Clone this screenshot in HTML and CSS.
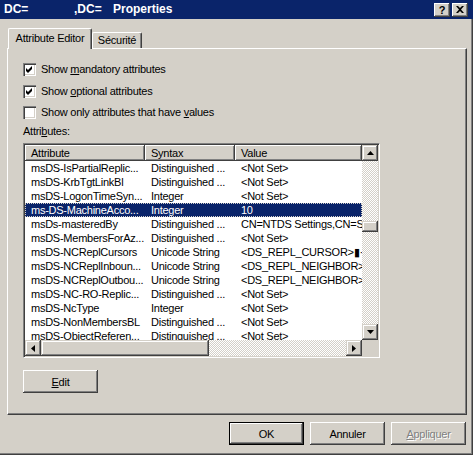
FILE: index.html
```html
<!DOCTYPE html>
<html>
<head>
<meta charset="utf-8">
<link rel="stylesheet" href="styles.css">
</head>
<body>
<div class="window">
  <div class="titlebar">
    <div class="title"><span class="t1">DC=</span><span class="t2">,DC=</span><span class="t3">Properties</span></div>
    <div class="tbtns">
      <span class="tbtn help">?</span>
      <span class="tbtn close"><svg width="8" height="7" viewBox="0 0 8 7"><path d="M0 0h2l2 2l2-2h2l-3 3.5l3 3.5h-2l-2-2l-2 2h-2l3-3.5z" fill="#000"/></svg></span>
    </div>
  </div>

  <div class="tabs">
    <div class="tab sel">Attribute Editor</div>
    <div class="tab">Sécurité</div>
  </div>

  <div class="panel">
    <div class="checks">
      <div class="chk"><span class="box"><svg width="13" height="13" viewBox="0 0 13 13"><path d="M3 5l2 2l4-4v3l-4 4l-2-2z" fill="#000"/></svg></span><span>Show <u>m</u>andatory attributes</span></div>
      <div class="chk"><span class="box"><svg width="13" height="13" viewBox="0 0 13 13"><path d="M3 5l2 2l4-4v3l-4 4l-2-2z" fill="#000"/></svg></span><span>Show <u>o</u>ptional attributes</span></div>
      <div class="chk"><span class="box"></span><span>Show only attributes that have <u>v</u>alues</span></div>
    </div>

    <div class="lbl">Attri<u>b</u>utes:</div>

    <div class="list">
      <div class="main">
        <div class="hdr">
          <div class="hc c1">Attribute</div>
          <div class="hc c2">Syntax</div>
          <div class="hc c3">Value</div>
        </div>
        <div class="row"><span class="c1">msDS-IsPartialReplic...</span><span class="c2">Distinguished ...</span><span class="c3">&lt;Not Set&gt;</span></div>
        <div class="row"><span class="c1">msDS-KrbTgtLinkBl</span><span class="c2">Distinguished ...</span><span class="c3">&lt;Not Set&gt;</span></div>
        <div class="row"><span class="c1">msDS-LogonTimeSyn...</span><span class="c2">Integer</span><span class="c3">&lt;Not Set&gt;</span></div>
        <div class="row selected"><span class="c1">ms-DS-MachineAcco...</span><span class="c2">Integer</span><span class="c3">10</span></div>
        <div class="row"><span class="c1">msDs-masteredBy</span><span class="c2">Distinguished ...</span><span class="c3">CN=NTDS Settings,CN=SERVER</span></div>
        <div class="row"><span class="c1">msDS-MembersForAz...</span><span class="c2">Distinguished ...</span><span class="c3">&lt;Not Set&gt;</span></div>
        <div class="row"><span class="c1">msDS-NCReplCursors</span><span class="c2">Unicode String</span><span class="c3">&lt;DS_REPL_CURSOR&gt;&#9646;&#183;&#183;</span></div>
        <div class="row"><span class="c1">msDS-NCReplInboun...</span><span class="c2">Unicode String</span><span class="c3">&lt;DS_REPL_NEIGHBOR&gt;</span></div>
        <div class="row"><span class="c1">msDS-NCReplOutbou...</span><span class="c2">Unicode String</span><span class="c3">&lt;DS_REPL_NEIGHBOR&gt;</span></div>
        <div class="row"><span class="c1">msDS-NC-RO-Replic...</span><span class="c2">Distinguished ...</span><span class="c3">&lt;Not Set&gt;</span></div>
        <div class="row"><span class="c1">msDS-NcType</span><span class="c2">Integer</span><span class="c3">&lt;Not Set&gt;</span></div>
        <div class="row"><span class="c1">msDS-NonMembersBL</span><span class="c2">Distinguished ...</span><span class="c3">&lt;Not Set&gt;</span></div>
        <div class="row"><span class="c1">msDS-ObjectReferen...</span><span class="c2">Distinguished ...</span><span class="c3">&lt;Not Set&gt;</span></div>
      </div>
      <div class="vscroll">
        <div class="sbtn"><svg width="7" height="4" viewBox="0 0 7 4"><path d="M3.5 0L7 4H0z" fill="#000"/></svg></div>
        <div class="track vtrack"><div class="thumb vthumb"></div></div>
        <div class="sbtn"><svg width="7" height="4" viewBox="0 0 7 4"><path d="M0 0H7L3.5 4z" fill="#000"/></svg></div>
      </div>
      <div class="hscroll">
        <div class="sbtn"><svg width="4" height="7" viewBox="0 0 4 7"><path d="M4 0V7L0 3.5z" fill="#000"/></svg></div>
        <div class="thumb hthumb"></div>
        <div class="track htrack"></div>
        <div class="sbtn"><svg width="4" height="7" viewBox="0 0 4 7"><path d="M0 0L4 3.5L0 7z" fill="#000"/></svg></div>
      </div>
      <div class="corner"></div>
    </div>

    <button class="btn edit"><u>E</u>dit</button>
  </div>

  <div class="footer">
    <button class="btn default">OK</button>
    <button class="btn">Annuler</button>
    <button class="btn disabled"><u>A</u>ppliquer</button>
  </div>
</div>
</body>
</html>
```

FILE: styles.css
```css
html, body {
  margin: 0;
  padding: 0;
  background: #d4d0c8;
}
body {
  font-family: "Liberation Sans", Arial, sans-serif;
  font-size: 11px;
  letter-spacing: -0.25px;
  color: #000;
}
.window {
  width: 473px;
  height: 455px;
  box-sizing: border-box;
  background: #d4d0c8;
  box-shadow: inset -1px -1px #404040, inset -2px -2px #808080;
  overflow: hidden;
}
.titlebar {
  height: 19px;
  background: #0a246a;
  color: #fff;
  display: flex;
  align-items: center;
  justify-content: space-between;
  padding: 0 5px 0 4px;
}
.title {
  display: flex;
  font-weight: bold;
  font-size: 12px;
  letter-spacing: 0;
  line-height: 19px;
}
.t1 { width: 70px; }
.t2 { width: 39px; }
.tbtns {
  display: flex;
  gap: 2px;
  margin-top: 1px;
}
.tbtn {
  width: 16px;
  height: 14px;
  box-sizing: border-box;
  background: #d4d0c8;
  box-shadow: inset -1px -1px #404040, inset 1px 1px #fff, inset -2px -2px #808080;
  display: flex;
  align-items: center;
  justify-content: center;
  color: #000;
  font-weight: bold;
  font-size: 11px;
  letter-spacing: 0;
}
.tbtn svg { display: block; margin: 0 0 1px 0; }

.tabs {
  display: flex;
  align-items: flex-end;
  height: 20px;
  margin-top: 9px;
  padding-left: 8px;
}
.tab {
  box-sizing: border-box;
  height: 16px;
  width: 50px;
  border-top: 1px solid #fff;
  border-left: 1px solid #fff;
  border-right: 1px solid #404040;
  box-shadow: inset -1px 0 #808080;
  border-radius: 2px 2px 0 0;
  text-align: center;
  line-height: 14px;
}
.tab.sel {
  width: 84px;
  height: 21px;
  margin-bottom: -1px;
  position: relative;
  z-index: 1;
  background: #d4d0c8;
  line-height: 18px;
}

.panel {
  margin-left: 7px;
  width: 460px;
  height: 367px;
  box-sizing: border-box;
  border-top: 1px solid #fff;
  border-left: 1px solid #fff;
  border-right: 1px solid #404040;
  border-bottom: 1px solid #404040;
  box-shadow: inset -1px -1px #808080;
  padding: 14px 0 0 15px;
}
.checks {
  display: flex;
  flex-direction: column;
  gap: 8.5px;
}
.chk {
  display: flex;
  align-items: center;
  gap: 5px;
  height: 13px;
  line-height: 13px;
}
.box {
  width: 13px;
  height: 13px;
  box-sizing: border-box;
  background: #fff;
  box-shadow: inset 1px 1px #808080, inset 2px 2px #404040, inset -1px -1px #fff, inset -2px -2px #d4d0c8;
  flex: none;
}
.box svg { display: block; }
.lbl {
  margin-top: 6px;
  line-height: 13px;
}

.list {
  margin-top: 5px;
  width: 357px;
  height: 215px;
  box-sizing: border-box;
  border: 1px solid;
  border-color: #808080 #fff #fff #808080;
  box-shadow: inset 1px 1px #404040, inset -1px -1px #d4d0c8;
  padding: 1px;
  background: #fff;
  display: grid;
  grid-template-columns: 337px 16px;
  grid-template-rows: 195px 16px;
}
.main {
  overflow: hidden;
  background: #fff;
}
.hdr {
  display: flex;
  height: 16px;
}
.hc {
  box-sizing: border-box;
  height: 16px;
  background: #d4d0c8;
  box-shadow: inset -1px -1px #404040, inset 1px 1px #fff, inset -2px -2px #808080;
  padding-left: 6px;
  line-height: 16px;
  white-space: nowrap;
  overflow: hidden;
}
.c1 { width: 120px; }
.c2 { width: 90px; }
.c3 { width: 127px; }
.row {
  display: flex;
  height: 14px;
  line-height: 14px;
  white-space: nowrap;
}
.row span {
  box-sizing: border-box;
  padding-left: 6px;
  overflow: hidden;
  flex: none;
}
.row.selected {
  background: #0a246a;
  color: #fff;
  outline: 1px dotted #d4d0c8;
  outline-offset: -1px;
}

.sbtn {
  width: 16px;
  height: 16px;
  box-sizing: border-box;
  background: #d4d0c8;
  box-shadow: inset -1px -1px #404040, inset 1px 1px #d4d0c8, inset -2px -2px #808080, inset 2px 2px #fff;
  display: flex;
  align-items: center;
  justify-content: center;
  flex: none;
}
.sbtn svg { display: block; }
.track {
  background: repeating-conic-gradient(#fff 0 25%, #d4d0c8 0 50%) 0 0 / 2px 2px;
  flex: 1;
}
.thumb {
  box-sizing: border-box;
  background: #d4d0c8;
  box-shadow: inset -1px -1px #404040, inset 1px 1px #d4d0c8, inset -2px -2px #808080, inset 2px 2px #fff;
}
.vscroll {
  display: flex;
  flex-direction: column;
}
.vtrack {
  overflow: hidden;
}
.vthumb {
  margin-top: 60px;
  width: 16px;
  height: 11px;
}
.hscroll {
  display: flex;
}
.hthumb {
  width: 168px;
  height: 16px;
  flex: none;
}
.corner {
  background: #d4d0c8;
}

.btn {
  width: 75px;
  height: 23px;
  box-sizing: border-box;
  border: 0;
  padding: 0;
  margin: 0;
  background: #d4d0c8;
  font: inherit;
  color: #000;
  letter-spacing: -0.25px;
  box-shadow: inset -1px -1px #404040, inset 1px 1px #fff, inset -2px -2px #808080, inset 2px 2px #d4d0c8;
  display: block;
}
.btn.edit {
  margin-top: 12px;
}
.btn.default {
  box-shadow: inset 0 0 0 1px #000, inset -2px -2px #404040, inset 2px 2px #fff, inset -3px -3px #808080;
}
.btn.disabled {
  color: #808080;
  text-shadow: 1px 1px #fff;
}
.footer {
  display: flex;
  justify-content: flex-end;
  gap: 6px;
  margin-top: 7px;
  padding-right: 7px;
}
```
